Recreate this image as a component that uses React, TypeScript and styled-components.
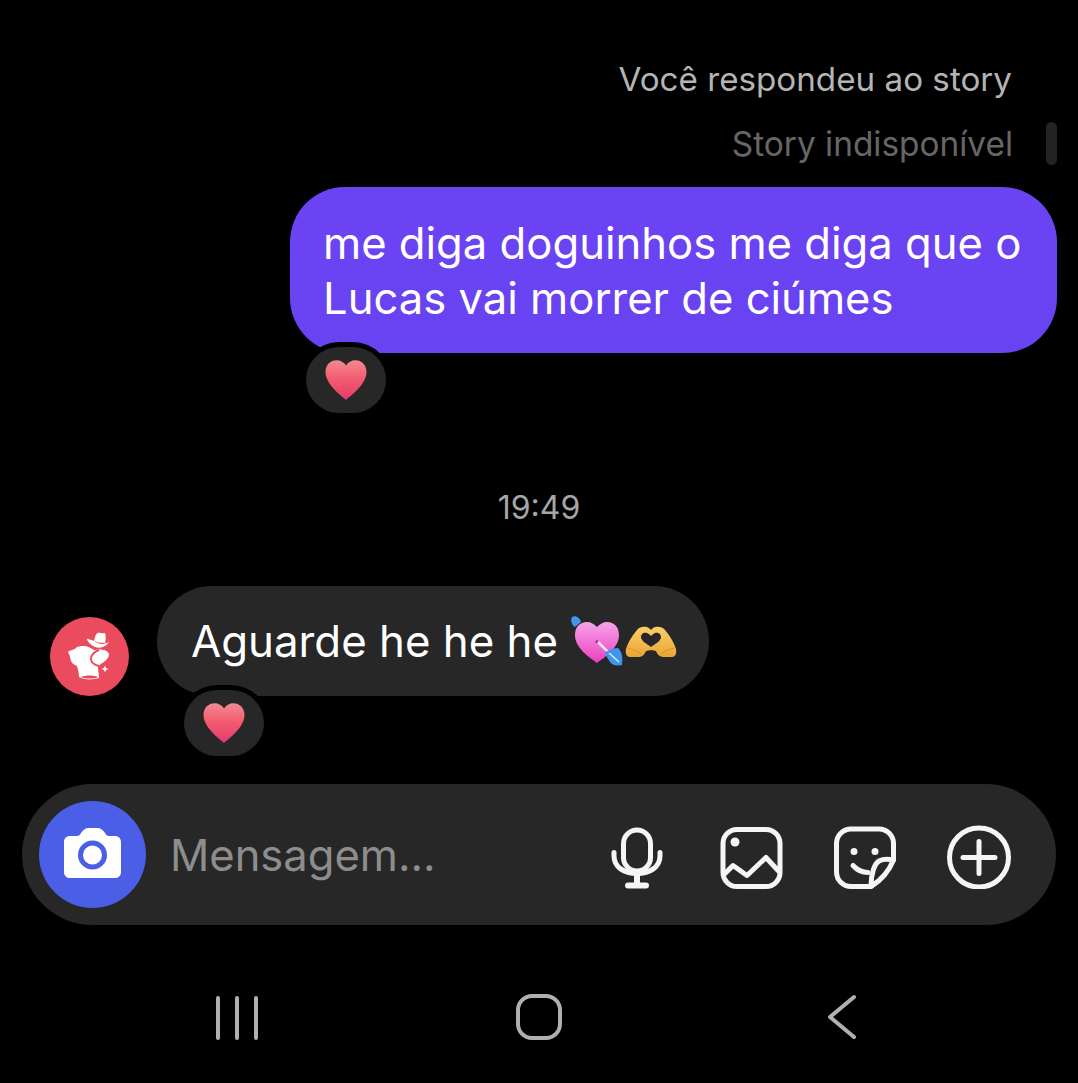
import React from 'react';
import styled, { createGlobalStyle } from 'styled-components';

const GlobalStyle = createGlobalStyle`
  html, body {
    margin: 0;
    padding: 0;
    background: #000;
  }
  body {
    font-family: Inter, Roboto, sans-serif;
  }
`;

const Screen = styled.div`
  width: 1078px;
  height: 1083px;
  overflow: hidden;
  background: #000;
  display: flex;
  flex-direction: column;
  padding-top: 59px;
  box-sizing: border-box;
`;

const ReplyLabel = styled.div`
  height: 40px;
  line-height: 40px;
  padding-right: 66px;
  text-align: right;
  font-size: 33.2px;
  color: #b4b4b4;
`;

const StoryRow = styled.div`
  display: flex;
  justify-content: flex-end;
  align-items: center;
  gap: 33px;
  height: 43px;
  margin-top: 23px;
  padding-right: 21px;
`;

const StoryText = styled.span`
  font-size: 33.4px;
  color: #666;
`;

const StoryBar = styled.div`
  width: 11px;
  height: 43px;
  border-radius: 6px;
  background: #232323;
`;

const SentBubble = styled.div`
  position: relative;
  align-self: flex-end;
  box-sizing: border-box;
  width: 767px;
  height: 166px;
  margin-top: 22px;
  margin-right: 21px;
  padding: 29px 0 0 33px;
  border-radius: 55px;
  background: linear-gradient(180deg, #6c43f3, #6843f1);
  color: #fff;
  font-size: 43.6px;
  line-height: 55px;
  white-space: nowrap;
`;

const Reaction = styled.div<{ $left: number; $top: number }>`
  position: absolute;
  left: ${(p) => p.$left}px;
  top: ${(p) => p.$top}px;
  width: 80px;
  height: 66px;
  border-radius: 33px;
  background: #272727;
  box-shadow: 0 0 0 5px #000;
  display: flex;
  align-items: center;
  justify-content: center;
`;

const TimeStamp = styled.div`
  height: 40px;
  line-height: 40px;
  margin-top: 135px;
  text-align: center;
  font-size: 32px;
  color: #a6a6a6;
`;

const ReceivedRow = styled.div`
  display: flex;
  align-items: flex-end;
  gap: 28px;
  margin-top: 58px;
  padding-left: 50px;
`;

const Avatar = styled.svg`
  width: 79px;
  height: 79px;
  display: block;
`;

const ReceivedBubble = styled.div`
  position: relative;
  box-sizing: border-box;
  width: 552px;
  height: 110px;
  padding-left: 34px;
  border-radius: 55px;
  background: #272727;
  color: #fff;
  font-size: 43.8px;
  display: flex;
  align-items: center;
`;

const BubbleText = styled.span`
  white-space: pre;
`;

const EmojiPair = styled.span`
  display: flex;
  align-items: center;
  margin: 2px 0 0 12px;
  gap: 1px;
`;

const Composer = styled.div`
  box-sizing: border-box;
  width: 1034px;
  height: 141px;
  margin: 88px 0 0 22px;
  padding: 0 45px 0 17px;
  border-radius: 71px;
  background: #272727;
  display: flex;
  align-items: center;
`;

const CameraButton = styled.div`
  box-sizing: border-box;
  width: 107px;
  height: 107px;
  padding-bottom: 4px;
  border-radius: 50%;
  background: #4b5ee6;
  display: flex;
  align-items: center;
  justify-content: center;
  flex-shrink: 0;
`;

const Placeholder = styled.span`
  margin-left: 24px;
  font-size: 43.5px;
  color: #8d8d8d;
`;

const ComposerIcons = styled.div`
  margin-left: auto;
  margin-top: 4px;
  display: flex;
  align-items: center;
  gap: 50px;
`;

const ComposerIcon = styled.svg`
  width: 64px;
  height: 64px;
  display: block;
  fill: none;
  stroke: #f5f5f5;
  stroke-width: 5;
  stroke-linecap: round;
  stroke-linejoin: round;
`;

const NavBar = styled.div`
  margin-top: 62px;
  display: flex;
  justify-content: center;
  gap: 242px;
`;

const NavIcon = styled.svg`
  width: 60px;
  height: 60px;
  display: block;
  fill: none;
  stroke: #b0b0b0;
  stroke-width: 4;
  stroke-linecap: round;
  stroke-linejoin: round;
`;

function Heart({ id }: { id: string }) {
  return (
    <svg width="44" height="42" viewBox="0 0 44 42">
      <defs>
        <linearGradient id={id} x1="0" y1="0" x2="0" y2="1">
          <stop offset="0" stopColor="#f38a90" />
          <stop offset="0.45" stopColor="#f35d72" />
          <stop offset="0.85" stopColor="#ea4468" />
          <stop offset="1" stopColor="#d9338f" />
        </linearGradient>
      </defs>
      <path
        d="M22 41C15 35 2 25 1.500 13.500C1.200 6 6.500 1.200 12.500 1.200C16.500 1.200 20 3.200 22 6.500C24 3.200 27.500 1.200 31.500 1.200C37.500 1.200 42.800 6 42.500 13.500C42 25 29 35 22 41Z"
        fill={`url(#${id})`}
      />
    </svg>
  );
}

function ArrowHeart() {
  return (
    <svg width="54" height="54" viewBox="0 0 54 54">
      <defs>
        <linearGradient id="pinkHeart" x1="0" y1="0" x2="0" y2="1">
          <stop offset="0" stopColor="#f7a3ea" />
          <stop offset="1" stopColor="#ea3fc0" />
        </linearGradient>
      </defs>
      <path d="M2 2C0 6 2 10 5 12L11 7C10 3 6 0 2 2Z" fill="#3f95ee" />
      <path
        d="M27 48C19 42 5 33 5 20C5 12 10 7 17 7C21 7 24 9 27 12C30 9 33 7 37 7C44 7 49 12 49 20C49 33 35 42 27 48Z"
        fill="url(#pinkHeart)"
      />
      <path d="M27 25C25 26 25 28 27 28C29 28 29 26 27 25Z" fill="#a11f87" />
      <path d="M28 27L39 38" stroke="#f7e5f0" strokeWidth="2.500" />
      <path d="M35 37C40 35 44 33 48 33C52 37 53 42 52 50C46 51 42 50 40 47C38 44 36 41 35 37Z" fill="#3f95ee" />
      <path d="M39 38L49 47" stroke="#d7ecfa" strokeWidth="1.500" />
    </svg>
  );
}

function HeartHands() {
  return (
    <svg width="52" height="32" viewBox="0 0 52 32">
      <defs>
        <linearGradient id="handGold" x1="0" y1="0" x2="0" y2="1">
          <stop offset="0" stopColor="#f9d068" />
          <stop offset="1" stopColor="#eba535" />
        </linearGradient>
      </defs>
      <path
        d="M1 23C3 16 8 9 12 4C15 0 21 0 24 2L26 4L28 2C31 0 37 0 40 4C44 9 49 16 51 23C52 28 50 31 47 31H38C35 31 32 28 31 25L26 24L21 25C20 28 17 31 14 31H5C2 31 0 28 1 23Z"
        fill="url(#handGold)"
      />
      <path
        d="M26 21C22 18 16 15 16 11C16 7 20 6 22 7C24 8 25 9 26 10C27 9 28 8 30 7C32 6 36 7 36 11C36 15 30 18 26 21Z"
        fill="#272727"
      />
      <path d="M3 22C5 23 12 24 16 28M49 22C47 23 40 24 36 28" fill="none" stroke="#d98f2a" strokeWidth="1" />
    </svg>
  );
}

function CameraIcon() {
  return (
    <svg width="57" height="50" viewBox="0 0 57 50">
      <path
        d="M6 8H13C15 8 16 7 17 5C19 2 21 0 25 0H33C37 0 39 2 41 5C42 7 43 8 45 8H51C54 8 57 10 57 14V44C57 48 54 50 51 50H6C3 50 0 48 0 44V14C0 10 3 8 6 8Z"
        fill="#fff"
      />
      <circle cx="28.500" cy="27" r="12" fill="#fff" stroke="#4b5ee6" strokeWidth="5" />
    </svg>
  );
}

export default function App() {
  return (
    <Screen>
      <GlobalStyle />
      <ReplyLabel>Você respondeu ao story</ReplyLabel>
      <StoryRow>
        <StoryText>Story indisponível</StoryText>
        <StoryBar />
      </StoryRow>
      <SentBubble>
        me diga doguinhos me diga que o
        <br />
        Lucas vai morrer de ciúmes
        <Reaction $left={16} $top={160}>
          <Heart id="heartSent" />
        </Reaction>
      </SentBubble>
      <TimeStamp>19:49</TimeStamp>
      <ReceivedRow>
        <Avatar viewBox="0 0 79 79">
          <circle cx="39.500" cy="39.500" r="39.500" fill="#ea4c5e" />
          <path
            d="M18 35C20 33 23 33 25 32C27 29 31 29 34 29C37 29 41 31 44 33C48 33 50 32 53 33C56 33 58 35 59 37C59 41 56 43 54 45C51 47 49 48 48 50C48 54 49 58 49 61C42 63 34 63 29 60C29 56 28 53 27 49C24 48 22 46 21 44C20 41 20 38 18 35Z"
            fill="#fff"
          />
          <path d="M49 33C44 35 41 38 41 42C41 45 44 48 49 49" fill="none" stroke="#ea4c5e" strokeWidth="2" />
          <path d="M31 60C35 58 44 58 48 60C44 62 35 62 31 60Z" fill="#ea4c5e" />
          <path d="M36 21C40 22 44 23 47 25C50 27 55 27 60 24C57 30 50 33 44 30C40 28 37 25 36 21Z" fill="#fff" stroke="#ea4c5e" strokeWidth="1" />
          <path d="M44 24C45 20 46 16 48 16C50 15 52 17 55 16C56 19 56 22 55 26C51 26 47 25 44 24Z" fill="#fff" />
          <path d="M55 48.500L56 51L58.500 52L56 53L55 55.500L54 53L51.500 52L54 51Z" fill="#fff" />
        </Avatar>
        <ReceivedBubble>
          <BubbleText>Aguarde he he he</BubbleText>
          <EmojiPair>
            <ArrowHeart />
            <HeartHands />
          </EmojiPair>
          <Reaction $left={27} $top={104}>
            <Heart id="heartReceived" />
          </Reaction>
        </ReceivedBubble>
      </ReceivedRow>
      <Composer>
        <CameraButton>
          <CameraIcon />
        </CameraButton>
        <Placeholder>Mensagem...</Placeholder>
        <ComposerIcons>
          <ComposerIcon viewBox="0 0 64 64">
            <rect x="18.500" y="5" width="27" height="41" rx="13.500" />
            <path d="M9 27.500V31C9 42 19 48.500 32 48.500C45 48.500 55 42 55 31V27.500" />
            <path d="M32 49V60M23 60.500H41" strokeWidth="6" />
          </ComposerIcon>
          <ComposerIcon viewBox="0 0 64 64">
            <rect x="4" y="4.500" width="57" height="57" rx="14" />
            <circle cx="16" cy="17" r="4.500" fill="#f5f5f5" stroke="none" />
            <path d="M6 48.500L14 40.500L28 50.500L47 32.500L59 45.500" />
          </ComposerIcon>
          <ComposerIcon viewBox="0 0 64 64">
            <path d="M38 61.500H18C10 61.500 3.500 55 3.500 47V18.500C3.500 10.500 10 4 18 4H46C54 4 60.500 10.500 60.500 18.500V35C56 46 47 56 38 61.500Z" />
            <path d="M60.500 35C55 34 50 34 46 36C41 39 38 50 38 61" />
            <circle cx="21" cy="26.500" r="3.500" fill="#f5f5f5" stroke="none" />
            <circle cx="42" cy="26.500" r="3.500" fill="#f5f5f5" stroke="none" />
            <path d="M20 40.500C24 45 29 47.500 35 47.500" />
          </ComposerIcon>
          <ComposerIcon viewBox="0 0 64 64">
            <circle cx="32" cy="32.500" r="29.500" />
            <path d="M32 16.500V48.500M16 32.500H48" />
          </ComposerIcon>
        </ComposerIcons>
      </Composer>
      <NavBar>
        <NavIcon viewBox="0 0 60 60">
          <path d="M11 11V51M30 11V51M49 11V51" />
        </NavIcon>
        <NavIcon viewBox="0 0 60 60">
          <rect x="9" y="9" width="42" height="42" rx="14" />
        </NavIcon>
        <NavIcon viewBox="0 0 60 60">
          <path d="M43 10L19 30L43 50" />
        </NavIcon>
      </NavBar>
    </Screen>
  );
}
